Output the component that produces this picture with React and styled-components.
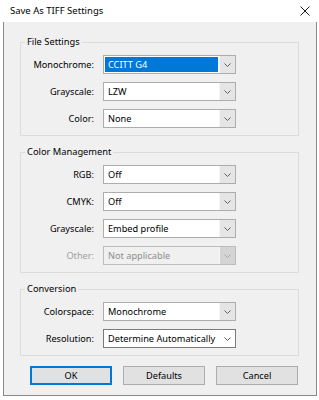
import React from "react";
import styled, { createGlobalStyle } from "styled-components";

const Global = createGlobalStyle`
  html, body {
    margin: 0;
    padding: 0;
    background: #ffffff;
  }
  body {
    font-family: "Segoe UI", "Noto Sans", "Liberation Sans", sans-serif;
    font-size: 9.2px;
    color: #000000;
  }
`;

const Dialog = styled.div`
  width: 319px;
  height: 400px;
  display: flex;
  flex-direction: column;
  background: #ffffff;
`;

const TitleBar = styled.div`
  height: 22px;
  flex: none;
  display: flex;
  align-items: center;
  justify-content: space-between;
  padding: 0 9px 0 10px;
  background: #ffffff;
`;

const Title = styled.span`
  font-size: 9.5px;
  line-height: 12px;
`;

const Body = styled.div`
  height: 374px;
  margin: 0 2px 0 3px;
  border: 1px solid #8a8a8a;
  border-top: none;
  background: #f0f0f0;
  padding: 14px 17px 0 16px;
  display: flex;
  flex-direction: column;
  gap: 10px;
  box-sizing: border-box;
`;

const Group = styled.fieldset`
  margin: 0;
  padding: 7px 0 7px 0;
  border: 1px solid #dcdcdc;
  min-width: 0;
  display: flex;
  flex-direction: column;
  gap: 8px;
`;

const Legend = styled.legend`
  padding: 0 2px;
  margin-left: 4px;
  line-height: 12px;
  font-size: 9.3px;
`;

const Row = styled.div`
  display: grid;
  grid-template-columns: 73px 133px;
  column-gap: 9px;
  align-items: center;
`;

const Label = styled.span`
  text-align: right;
  color: ${(p) => (p.$disabled ? "#a0a0a0" : "#000000")};
`;

const Combo = styled.div`
  height: 19px;
  box-sizing: border-box;
  display: flex;
  border: 1px solid ${(p) => (p.$plain ? "#7a7a7a" : p.$disabled ? "#bcbcbc" : "#adadad")};
  background: ${(p) => (p.$disabled ? "#f0f0f0" : "#ffffff")};
`;

const Field = styled.div`
  flex: 1;
  display: flex;
  align-items: center;
  padding: 1px;
  min-width: 0;
`;

const Value = styled.span`
  flex: 1;
  height: 100%;
  display: flex;
  align-items: center;
  padding-left: 3px;
  white-space: nowrap;
  overflow: hidden;
  background: ${(p) => (p.$selected ? "#0078d7" : "transparent")};
  color: ${(p) => (p.$selected ? "#ffffff" : p.$disabled ? "#8d8d8d" : "#000000")};
`;

const Arrow = styled.div`
  width: 15px;
  flex: none;
  display: flex;
  align-items: center;
  justify-content: center;
  background: ${(p) => (p.$plain ? "transparent" : p.$disabled ? "#d4d4d4" : "#e5e5e5")};
  border-left: ${(p) => (p.$plain ? "none" : "1px solid #f5f5f5")};
`;

const ButtonRow = styled.div`
  display: grid;
  grid-template-columns: repeat(3, 82px);
  column-gap: 11px;
  padding-left: 10px;
`;

const Button = styled.div`
  height: 19px;
  box-sizing: border-box;
  display: flex;
  align-items: center;
  justify-content: center;
  background: #e1e1e1;
  border: ${(p) => (p.$default ? "2px solid #0078d7" : "1px solid #adadad")};
`;

const Chevron = ({ color = "#606060" }) => (
  <svg width="7" height="4" viewBox="0 0 7 4">
    <path d="M0.5 0.5 L3.5 3.5 L6.5 0.5" fill="none" stroke={color} strokeWidth="1" />
  </svg>
);

const CloseIcon = () => (
  <svg width="10" height="10" viewBox="0 0 10 10">
    <path d="M0.5 0.5 L9.5 9.5 M9.5 0.5 L0.5 9.5" stroke="#1a1a1a" strokeWidth="1" />
  </svg>
);

const Select = ({ label, value, selected, disabled, plain }) => (
  <Row>
    <Label $disabled={disabled}>{label}</Label>
    <Combo $disabled={disabled} $plain={plain}>
      <Field>
        <Value $selected={selected} $disabled={disabled}>{value}</Value>
      </Field>
      <Arrow $disabled={disabled} $plain={plain}>
        <Chevron color={disabled ? "#a8a8a8" : "#606060"} />
      </Arrow>
    </Combo>
  </Row>
);

export default function App() {
  return (
    <Dialog>
      <Global />
      <TitleBar>
        <Title>Save As TIFF Settings</Title>
        <CloseIcon />
      </TitleBar>
      <Body>
        <Group>
          <Legend>File Settings</Legend>
          <Select label="Monochrome:" value="CCITT G4" selected />
          <Select label="Grayscale:" value="LZW" />
          <Select label="Color:" value="None" />
        </Group>
        <Group>
          <Legend>Color Management</Legend>
          <Select label="RGB:" value="Off" />
          <Select label="CMYK:" value="Off" />
          <Select label="Grayscale:" value="Embed profile" />
          <Select label="Other:" value="Not applicable" disabled />
        </Group>
        <Group>
          <Legend>Conversion</Legend>
          <Select label="Colorspace:" value="Monochrome" />
          <Select label="Resolution:" value="Determine Automatically" plain />
        </Group>
        <ButtonRow>
          <Button $default>OK</Button>
          <Button>Defaults</Button>
          <Button>Cancel</Button>
        </ButtonRow>
      </Body>
    </Dialog>
  );
}
